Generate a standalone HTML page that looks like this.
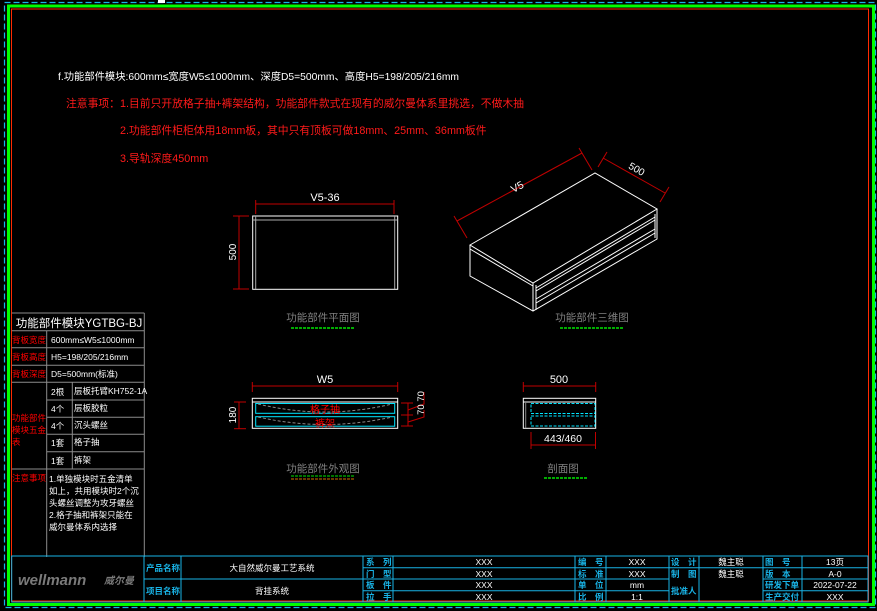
<!DOCTYPE html>
<html><head><meta charset="utf-8"><style>
html,body{margin:0;padding:0;background:#000;width:877px;height:611px;overflow:hidden}
svg{display:block}
text{font-family:"Liberation Sans","Noto Sans CJK SC",sans-serif}
</style></head><body>
<svg width="877" height="611" viewBox="0 0 877 611" xmlns="http://www.w3.org/2000/svg">
<rect width="877" height="611" fill="#000"/>
<!-- frames -->
<rect x="4.5" y="2.5" width="871" height="605" fill="none" stroke="#19b3e6" stroke-width="1.2" stroke-dasharray="6 3"/>
<rect x="8.5" y="6" width="865" height="598.5" fill="none" stroke="#00ff00" stroke-width="3"/>
<rect x="11.5" y="9" width="857" height="592" fill="none" stroke="#ff2a00" stroke-width="1"/>
<rect x="158" y="0" width="7" height="3" fill="#fff"/>

<!-- top text -->
<text x="58" y="80" fill="#fff" font-size="10.3">f.功能部件模块:600mm≤宽度W5≤1000mm、深度D5=500mm、高度H5=198/205/216mm</text>
<text x="66" y="107" fill="#ff1a1a" font-size="10.8">注意事项：1.目前只开放格子抽+裤架结构，功能部件款式在现有的威尔曼体系里挑选，不做木抽</text>
<text x="120" y="134" fill="#ff1a1a" font-size="10.8">2.功能部件柜柜体用18mm板，其中只有顶板可做18mm、25mm、36mm板件</text>
<text x="120" y="162" fill="#ff1a1a" font-size="10.8">3.导轨深度450mm</text>

<!-- plan view -->
<g fill="none" stroke-width="1">
<rect x="252.7" y="216" width="145" height="73.3" stroke="#fff"/>
<line x1="255.7" y1="216" x2="255.7" y2="289" stroke="#aaa"/>
<line x1="394.7" y1="216" x2="394.7" y2="289" stroke="#aaa"/>
<line x1="252.7" y1="220" x2="397.7" y2="220" stroke="#aaa"/>
<line x1="255.7" y1="204" x2="394" y2="204" stroke="#c00000"/>
<line x1="255.7" y1="200" x2="255.7" y2="214" stroke="#c00000"/>
<line x1="394" y1="200" x2="394" y2="214" stroke="#c00000"/>
<line x1="239" y1="216" x2="239" y2="289" stroke="#c00000"/>
<line x1="233" y1="216" x2="249" y2="216" stroke="#c00000"/>
<line x1="233" y1="289" x2="249" y2="289" stroke="#c00000"/>
</g>
<text x="325" y="201" fill="#fff" font-size="11" text-anchor="middle">V5-36</text>
<text transform="translate(236,252) rotate(-90)" fill="#fff" font-size="10" text-anchor="middle">500</text>
<text x="323" y="321" fill="#808080" font-size="10.5" text-anchor="middle">功能部件平面图</text>
<line x1="291" y1="328" x2="355" y2="328" stroke="#00e600" stroke-width="1.5" stroke-dasharray="3 1"/>

<!-- 3D view -->
<g fill="none" stroke="#fff" stroke-width="1">
<polygon points="470,245 595,173 657,209 533,283"/>
<polyline points="470,245 470,276 533,311 657,239 657,209"/>
<line x1="533" y1="283" x2="533" y2="311"/>
<line x1="536" y1="285" x2="536" y2="310"/>
<line x1="470" y1="249" x2="533" y2="286"/>
<line x1="536" y1="288" x2="655" y2="217"/>
<line x1="536" y1="291" x2="655" y2="220"/>
<line x1="536" y1="299" x2="655" y2="229"/>
<line x1="536" y1="303" x2="655" y2="233"/>
<line x1="655" y1="214" x2="655" y2="238"/>
</g>
<g stroke="#c00000" fill="none">
<line x1="457" y1="221" x2="582" y2="153"/>
<line x1="454" y1="216" x2="467" y2="238"/>
<line x1="579" y1="148" x2="592" y2="170"/>
<line x1="603" y1="158" x2="665" y2="193"/>
<line x1="598" y1="167" x2="607" y2="152"/>
<line x1="660" y1="202" x2="669" y2="187"/>
</g>
<text transform="translate(519,190) rotate(-29)" fill="#fff" font-size="10.5" text-anchor="middle">V5</text>
<text transform="translate(635,172) rotate(30)" fill="#fff" font-size="10" text-anchor="middle">500</text>
<text x="592" y="321" fill="#808080" font-size="10.5" text-anchor="middle">功能部件三维图</text>
<line x1="560" y1="328" x2="623" y2="328" stroke="#00e600" stroke-width="1.5" stroke-dasharray="3 1"/>

<!-- front view -->
<g fill="none" stroke-width="1">
<rect x="252.3" y="398.3" width="145.4" height="30" stroke="#fff"/>
<line x1="252.3" y1="402" x2="397.7" y2="402" stroke="#fff"/>
<rect x="255.7" y="403.5" width="139" height="9.8" stroke="#00e5ff"/>
<rect x="255.7" y="416.7" width="139" height="9.5" stroke="#00e5ff"/>
<path d="M258,404 Q325,420 392,404" stroke="#888" stroke-dasharray="3 2"/>
<path d="M258,417 Q325,432 392,417" stroke="#888" stroke-dasharray="3 2"/>
<g stroke="#c00000">
<line x1="252.3" y1="386" x2="397.7" y2="386"/>
<line x1="252.3" y1="382" x2="252.3" y2="392"/>
<line x1="397.7" y1="382" x2="397.7" y2="392"/>
<line x1="239" y1="402" x2="239" y2="428.7"/>
<line x1="234" y1="402" x2="246" y2="402"/>
<line x1="234" y1="428.7" x2="246" y2="428.7"/>
<line x1="408" y1="403" x2="408" y2="426"/>
<line x1="401" y1="403" x2="413" y2="403"/>
<line x1="401" y1="415" x2="413" y2="415"/>
<line x1="401" y1="426" x2="413" y2="426"/>
<polyline points="408,410 424,404 424,392"/>
<polyline points="408,422 424,417 424,410"/>
</g>
</g>
<text x="325" y="383" fill="#fff" font-size="11" text-anchor="middle">W5</text>
<text transform="translate(236,415) rotate(-90)" fill="#fff" font-size="10" text-anchor="middle">180</text>
<text transform="translate(424,403) rotate(-90)" fill="#fff" font-size="9.5" text-anchor="middle">70 70</text>
<text x="325" y="413" fill="#ff0000" font-size="10" text-anchor="middle">格子抽</text>
<text x="325" y="427" fill="#ff0000" font-size="10" text-anchor="middle">裤架</text>
<text x="323" y="472" fill="#808080" font-size="10.5" text-anchor="middle">功能部件外观图</text>
<line x1="291" y1="476" x2="355" y2="476" stroke="#00e600" stroke-width="1" stroke-dasharray="3 1"/>
<line x1="291" y1="479" x2="355" y2="479" stroke="#d07000" stroke-width="1" stroke-dasharray="3 1"/>

<!-- section -->
<g fill="none" stroke-width="1">
<rect x="523.3" y="398.3" width="72.4" height="30" stroke="#fff"/>
<line x1="523.3" y1="402" x2="595.7" y2="402" stroke="#fff"/>
<line x1="525.7" y1="402" x2="525.7" y2="428" stroke="#888"/>
<rect x="531" y="403.5" width="64" height="10" stroke="#00e5ff" stroke-dasharray="3 1.5"/>
<rect x="531" y="416" width="64" height="10" stroke="#00e5ff" stroke-dasharray="3 1.5"/>
<g stroke="#c00000">
<line x1="523.3" y1="386" x2="595.7" y2="386"/>
<line x1="523.3" y1="382" x2="523.3" y2="392"/>
<line x1="595.7" y1="382" x2="595.7" y2="392"/>
<line x1="531" y1="445" x2="595.5" y2="445"/>
<line x1="531" y1="432" x2="531" y2="449"/>
<line x1="595.5" y1="432" x2="595.5" y2="449"/>
</g>
</g>
<text x="559" y="383" fill="#fff" font-size="11" text-anchor="middle">500</text>
<text x="563" y="442" fill="#fff" font-size="10.5" text-anchor="middle">443/460</text>
<text x="563" y="472" fill="#808080" font-size="10.5" text-anchor="middle">剖面图</text>
<line x1="544" y1="478" x2="588" y2="478" stroke="#00e600" stroke-width="1.5" stroke-dasharray="3 1"/>

<!-- left table -->
<g stroke="#8c8c8c" stroke-width="1" fill="none">
<line x1="11.7" y1="313" x2="144.3" y2="313"/>
<line x1="144.3" y1="313" x2="144.3" y2="557"/>
<line x1="46.7" y1="330.7" x2="46.7" y2="557"/>
<line x1="72.3" y1="382.3" x2="72.3" y2="469"/>
<line x1="11.7" y1="330.7" x2="144.3" y2="330.7"/>
<line x1="11.7" y1="347.7" x2="144.3" y2="347.7"/>
<line x1="11.7" y1="365.3" x2="144.3" y2="365.3"/>
<line x1="11.7" y1="382.3" x2="144.3" y2="382.3"/>
<line x1="46.7" y1="400" x2="144.3" y2="400"/>
<line x1="46.7" y1="417.3" x2="144.3" y2="417.3"/>
<line x1="46.7" y1="434.3" x2="144.3" y2="434.3"/>
<line x1="46.7" y1="451.7" x2="144.3" y2="451.7"/>
<line x1="11.7" y1="469" x2="144.3" y2="469"/>
</g>
<text x="79" y="327" fill="#fff" font-size="11.5" text-anchor="middle">功能部件模块YGTBG-BJ</text>
<g font-size="8.5" fill="#ff0000">
<text x="12" y="343">背板宽度</text>
<text x="12" y="360">背板高度</text>
<text x="12" y="377">背板深度</text>
<text x="12" y="421">功能部件</text>
<text x="12" y="433">模块五金</text>
<text x="12" y="445">表</text>
<text x="12" y="481">注意事项</text>
</g>
<g font-size="8.5" fill="#fff">
<text x="51" y="343">600mm≤W5≤1000mm</text>
<text x="51" y="360">H5=198/205/216mm</text>
<text x="51" y="377">D5=500mm(标准)</text>
<text x="51" y="395">2根</text><text x="74" y="394">层板托臂KH752-1A</text>
<text x="51" y="412">4个</text><text x="74" y="411">层板胶粒</text>
<text x="51" y="429">4个</text><text x="74" y="428">沉头螺丝</text>
<text x="51" y="446">1套</text><text x="74" y="445">格子抽</text>
<text x="51" y="464">1套</text><text x="74" y="463">裤架</text>
<text x="49" y="482">1.单独模块时五金清单</text>
<text x="49" y="494">如上，共用模块时2个沉</text>
<text x="49" y="506">头螺丝调整为攻牙螺丝</text>
<text x="49" y="518">2.格子抽和裤架只能在</text>
<text x="49" y="530">威尔曼体系内选择</text>
</g>

<!-- title block -->
<g stroke="#19b3e6" stroke-width="1" fill="none">
<rect x="11.7" y="556" width="856.3" height="46"/>
<line x1="144" y1="556" x2="144" y2="602"/>
<line x1="181" y1="556" x2="181" y2="602"/>
<line x1="363" y1="556" x2="363" y2="602"/>
<line x1="393" y1="556" x2="393" y2="602"/>
<line x1="575" y1="556" x2="575" y2="602"/>
<line x1="606" y1="556" x2="606" y2="602"/>
<line x1="669" y1="556" x2="669" y2="602"/>
<line x1="699" y1="556" x2="699" y2="602"/>
<line x1="763" y1="556" x2="763" y2="602"/>
<line x1="802" y1="556" x2="802" y2="602"/>
<line x1="144" y1="579" x2="363" y2="579"/>
<line x1="363" y1="567.7" x2="868" y2="567.7"/>
<line x1="363" y1="579" x2="669" y2="579"/>
<line x1="763" y1="579" x2="868" y2="579"/>
<line x1="363" y1="590.7" x2="669" y2="590.7"/>
<line x1="763" y1="590.7" x2="868" y2="590.7"/>
</g>
<text x="18" y="585" fill="#7a7a7a" font-size="15" font-weight="bold" font-style="italic">wellmann</text>
<text x="104" y="584" fill="#7a7a7a" font-size="10" font-weight="bold" font-style="italic">威尔曼</text>
<g font-size="8.5" fill="#19b3e6" font-weight="bold">
<text x="146" y="571">产品名称</text>
<text x="146" y="594">项目名称</text>
<text x="366" y="565">系　列</text>
<text x="366" y="577">门　型</text>
<text x="366" y="588">板　件</text>
<text x="366" y="600">拉　手</text>
<text x="578" y="565">编　号</text>
<text x="578" y="577">标　准</text>
<text x="578" y="588">单　位</text>
<text x="578" y="600">比　例</text>
<text x="671" y="565">设　计</text>
<text x="671" y="577">制　图</text>
<text x="671" y="594">批准人</text>
<text x="765" y="565">图　号</text>
<text x="765" y="577">版　本</text>
<text x="765" y="588">研发下单</text>
<text x="765" y="600">生产交付</text>
</g>
<g font-size="8.5" fill="#fff" text-anchor="middle">
<text x="272" y="571">大自然威尔曼工艺系统</text>
<text x="272" y="594">背挂系统</text>
<text x="484" y="565">XXX</text>
<text x="484" y="577">XXX</text>
<text x="484" y="588">XXX</text>
<text x="484" y="600">XXX</text>
<text x="637" y="565">XXX</text>
<text x="637" y="577">XXX</text>
<text x="637" y="588">mm</text>
<text x="637" y="600">1:1</text>
<text x="731" y="565">魏主聪</text>
<text x="731" y="577">魏主聪</text>
<text x="835" y="565">13页</text>
<text x="835" y="577">A-0</text>
<text x="835" y="588">2022-07-22</text>
<text x="835" y="600">XXX</text>
</g>
</svg>
</body></html>
